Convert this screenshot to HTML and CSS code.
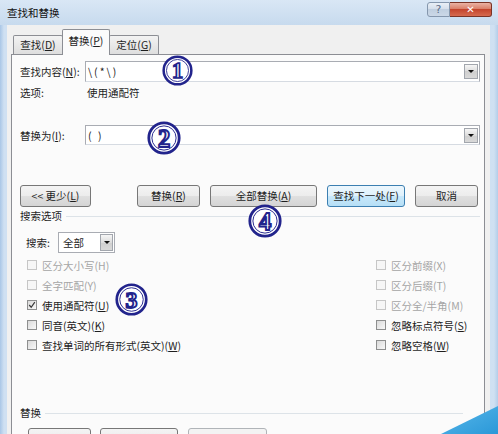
FILE: index.html
```html
<!DOCTYPE html>
<html lang="zh-CN">
<head>
<meta charset="utf-8">
<title>查找和替换</title>
<link rel="stylesheet" href="styles.css">
</head>
<body>
<div class="window">
  <div class="titlebar">
    <span class="title">查找和替换</span>
    <div class="caption-btns">
      <span class="btn-help">?</span>
      <span class="btn-close">✕</span>
    </div>
  </div>
  <div class="client">
    <div class="tabs">
      <div class="tab">查找(<u>D</u>)</div>
      <div class="tab active">替换(<u>P</u>)</div>
      <div class="tab">定位(<u>G</u>)</div>
    </div>
    <div class="panel">
      <div class="field-row r1">
        <label class="flabel">查找内容(<u>N</u>):</label>
        <div class="combo"><span class="val">\(*\)</span><span class="drop"></span></div>
      </div>
      <div class="opt-row"><span class="flabel">选项:</span><span class="optval">使用通配符</span></div>
      <div class="field-row r2">
        <label class="flabel">替换为(<u>I</u>):</label>
        <div class="combo"><span class="val">( )</span><span class="drop"></span></div>
      </div>
      <div class="btn-row">
        <span class="btn w-less">&lt;&lt; 更少(<u>L</u>)</span>
        <span class="btn w-rep">替换(<u>R</u>)</span>
        <span class="btn w-all">全部替换(<u>A</u>)</span>
        <span class="btn w-next focus">查找下一处(<u>F</u>)</span>
        <span class="btn w-cancel">取消</span>
      </div>
      <div class="group-title">搜索选项</div>
      <div class="search-row">
        <span class="slabel">搜索:</span>
        <div class="select"><span>全部</span><span class="drop"></span></div>
      </div>
      <div class="checks">
        <div class="col">
          <div class="chk disabled"><span class="cb"></span><span class="ct">区分大小写(H)</span></div>
          <div class="chk disabled"><span class="cb"></span><span class="ct">全字匹配(Y)</span></div>
          <div class="chk"><span class="cb"><svg viewBox="0 0 10 10" width="8" height="8"><path d="M1.5 5 L4 7.8 L8.5 1.5" fill="none" stroke="#3a3a3a" stroke-width="1.5"/></svg></span><span class="ct">使用通配符(<u>U</u>)</span></div>
          <div class="chk"><span class="cb"></span><span class="ct">同音(英文)(<u>K</u>)</span></div>
          <div class="chk"><span class="cb"></span><span class="ct">查找单词的所有形式(英文)(<u>W</u>)</span></div>
        </div>
        <div class="col">
          <div class="chk disabled"><span class="cb"></span><span class="ct">区分前缀(X)</span></div>
          <div class="chk disabled"><span class="cb"></span><span class="ct">区分后缀(T)</span></div>
          <div class="chk disabled"><span class="cb"></span><span class="ct">区分全/半角(M)</span></div>
          <div class="chk"><span class="cb"></span><span class="ct">忽略标点符号(<u>S</u>)</span></div>
          <div class="chk"><span class="cb"></span><span class="ct">忽略空格(<u>W</u>)</span></div>
        </div>
      </div>
      <div class="group-title g2">替换</div>
      <div class="btn-row bottom">
        <span class="btn w-fmt">格式(<u>O</u>) ▾</span>
        <span class="btn w-spec">特殊格式(<u>E</u>) ▾</span>
        <span class="btn w-nofmt disabled">不限定格式(T)</span>
      </div>
    </div>
  </div>

  <svg class="mark m1" viewBox="0 0 32 32"><circle cx="16" cy="16" r="14.3" fill="#fff" stroke="#22248c" stroke-width="2.6"/><circle cx="16" cy="16" r="11.4" fill="none" stroke="#22248c" stroke-width="0.9"/><text x="16" y="24" text-anchor="middle" class="mtxt">1</text></svg>
  <svg class="mark m2" viewBox="0 0 32 32"><circle cx="16" cy="16" r="14.3" fill="#fff" stroke="#22248c" stroke-width="2.6"/><circle cx="16" cy="16" r="11.4" fill="none" stroke="#22248c" stroke-width="0.9"/><text x="16" y="24" text-anchor="middle" class="mtxt">2</text></svg>
  <svg class="mark m3" viewBox="0 0 32 32"><circle cx="16" cy="16" r="14.3" fill="#fff" stroke="#22248c" stroke-width="2.6"/><circle cx="16" cy="16" r="11.4" fill="none" stroke="#22248c" stroke-width="0.9"/><text x="16" y="24" text-anchor="middle" class="mtxt">3</text></svg>
  <svg class="mark m4" viewBox="0 0 32 32"><circle cx="16" cy="16" r="14.3" fill="#fff" stroke="#22248c" stroke-width="2.6"/><circle cx="16" cy="16" r="11.4" fill="none" stroke="#22248c" stroke-width="0.9"/><text x="16" y="24" text-anchor="middle" class="mtxt">4</text></svg>
  <div class="corner"></div>
</div>
</body>
</html>
```
FILE: styles.css
```css
* { box-sizing: border-box; }
html, body { margin: 0; padding: 0; }
body {
  font-family: "Noto Sans CJK SC", "Noto Sans", sans-serif;
  font-size: 10.5px;
  color: #1e1e1e;
  background: #c6daee;
}
u { text-decoration: underline; text-underline-offset: 1px; }

.window {
  position: relative;
  width: 498px;
  height: 434px;
  overflow: hidden;
  display: flex;
  flex-direction: column;
  background: linear-gradient(to right, #a9c6e6 0, #cfe0f2 4px, #c9dcf0 50%, #cfe0f2 calc(100% - 4px), #b3cde9 100%);
}

.titlebar {
  height: 25px;
  flex: none;
  display: flex;
  justify-content: space-between;
  align-items: flex-start;
  background: linear-gradient(to bottom, #d9e7f5, #c7daee);
}
.title {
  padding: 6px 0 0 7px;
  line-height: 14px;
  color: #111;
}
.caption-btns {
  display: flex;
  margin: 2px 6px 0 0;
}
.btn-help {
  width: 23px;
  height: 15px;
  border: 1px solid #8597ad;
  border-radius: 3px 0 0 3px;
  background: linear-gradient(to bottom, #e9eff6, #d3deea 50%, #c0cfe0 50%, #cbd8e7);
  color: #5a6c86;
  font: 11px/13px "DejaVu Sans", sans-serif;
  text-align: center;
}
.btn-close {
  width: 42px;
  height: 15px;
  border: 1px solid #7a3326;
  border-left: 0;
  border-radius: 0 3px 3px 0;
  background: linear-gradient(to bottom, #eab2a4, #d87a63 50%, #c4452d 50%, #d66a4f);
  color: #fff;
  font: bold 10px/13px "DejaVu Sans", sans-serif;
  text-align: center;
}

.client {
  flex: 1;
  margin: 0 8px 0 7px;
  background: #f0f0f0;
  padding: 4px 5px 0 4px;
  display: flex;
  flex-direction: column;
}

.tabs {
  display: flex;
  align-items: flex-end;
  height: 25px;
  padding-left: 2px;
  flex: none;
}
.tab {
  width: 50px;
  height: 19px;
  border: 1px solid #8c8e94;
  border-bottom: 0;
  border-radius: 2px 2px 0 0;
  background: linear-gradient(to bottom, #f3f3f3, #dedede);
  text-align: center;
  line-height: 18px;
  margin-right: -1px;
}
.tab.active {
  width: 48px;
  height: 26px;
  margin-bottom: -1px;
  background: #fbfbfb;
  line-height: 22px;
  position: relative;
  z-index: 1;
}

.panel {
  flex: 1;
  border: 1px solid #8c8e94;
  background: #fbfbfb;
  padding: 0 4px 0 8px;
}

.field-row {
  display: flex;
  align-items: center;
}
.flabel { width: 65px; flex: none; }
.r1 { margin-top: 6px; }
.r2 { margin-top: 25px; }
.combo {
  flex: 1;
  height: 21px;
  border: 1px solid #a9acb3;
  border-bottom-color: #d6dbe2;
  background: #fff;
  display: flex;
  align-items: center;
  justify-content: space-between;
  padding: 0 1px 0 2px;
}
.r2 .combo { height: 20px; }
.val { letter-spacing: 2px; }
.drop {
  width: 14px;
  height: 15px;
  border: 1px solid #a2a6ad;
  background: linear-gradient(to bottom, #f6f6f6, #dcdcdc 50%, #cfcfcf 50%, #d9d9d9);
  display: flex;
  align-items: center;
  justify-content: center;
}
.drop::after {
  content: "";
  border-left: 3px solid transparent;
  border-right: 3px solid transparent;
  border-top: 3px solid #111;
}

.opt-row {
  display: flex;
  margin-top: 4px;
  height: 14px;
  line-height: 14px;
}
.optval { padding-left: 2px; }

.btn-row {
  display: flex;
  margin-top: 40px;
  height: 22px;
}
.btn {
  height: 22px;
  border: 1px solid #777;
  border-radius: 3px;
  background: linear-gradient(to bottom, #f4f4f4, #ececec 50%, #e0e0e0 50%, #d4d4d4);
  text-align: center;
  line-height: 20px;
  flex: none;
}
.btn.focus {
  border-color: #3c7fb1;
  background: linear-gradient(to bottom, #edf7fd, #dff1fc 50%, #c8e8fb 50%, #b6dff6);
}
.btn.disabled {
  border-color: #b0b4b8;
  color: #8a8a8a;
  background: #f3f3f3;
}
.w-less { width: 71px; }
.w-rep { width: 63px; margin-left: 46px; }
.w-all { width: 107px; margin-left: 10px; }
.w-next { width: 78px; margin-left: 10px; }
.w-cancel { width: 63px; margin-left: 10px; }

.group-title {
  display: flex;
  align-items: center;
  gap: 4px;
  margin-top: 2px;
  height: 14px;
  line-height: 14px;
}
.group-title::after {
  content: "";
  flex: 1;
  border-top: 1px solid #dde3e8;
}

.search-row {
  display: flex;
  align-items: center;
  margin-top: 9px;
  padding-left: 6px;
}
.slabel { width: 32px; flex: none; }
.select {
  width: 57px;
  height: 21px;
  border: 1px solid #a9acb3;
  background: #fff;
  display: flex;
  align-items: center;
  justify-content: space-between;
  padding: 0 1px 0 4px;
}
.select .drop { width: 13px; height: 17px; }

.checks {
  display: grid;
  grid-template-columns: 349px 1fr;
  margin-top: 2px;
  padding-left: 7px;
}
.col { display: flex; flex-direction: column; }
.chk {
  height: 20px;
  display: flex;
  align-items: center;
  gap: 5px;
  white-space: nowrap;
}
.ct { white-space: nowrap; }
.cb {
  width: 10px;
  height: 10px;
  flex: none;
  border: 1px solid #8e8f8f;
  background: linear-gradient(135deg, #dadada, #f8f8f8);
  display: flex;
  align-items: center;
  justify-content: center;
}
.chk.disabled { color: #a5a5a5; }
.chk.disabled .cb { border-color: #c6c6c6; background: #f6f6f6; }

.g2 { margin-top: 51px; margin-right: 17px; }
.bottom { margin-top: 8px; padding-left: 8px; }
.w-fmt { width: 63px; }
.w-spec { width: 78px; margin-left: 9px; }
.w-nofmt { width: 79px; margin-left: 10px; }

.mark { position: absolute; }
.m1 { left: 162px; top: 55px; width: 31px; height: 31px; }
.m2 { left: 147px; top: 121px; width: 34px; height: 34px; }
.m3 { left: 115px; top: 283px; width: 33px; height: 33px; }
.m4 { left: 248px; top: 204px; width: 34px; height: 34px; }
.mtxt {
  font-family: "Liberation Serif", serif;
  font-weight: bold;
  font-size: 23px;
  fill: #fff;
  stroke: #22248c;
  stroke-width: 1.8px;
}

.corner {
  position: absolute;
  right: 0;
  bottom: 0;
  width: 57px;
  height: 28px;
  background: linear-gradient(to bottom right, #5ab8ea, #2a98d8);
  clip-path: polygon(100% 0, 100% 100%, 0 100%);
}
```
